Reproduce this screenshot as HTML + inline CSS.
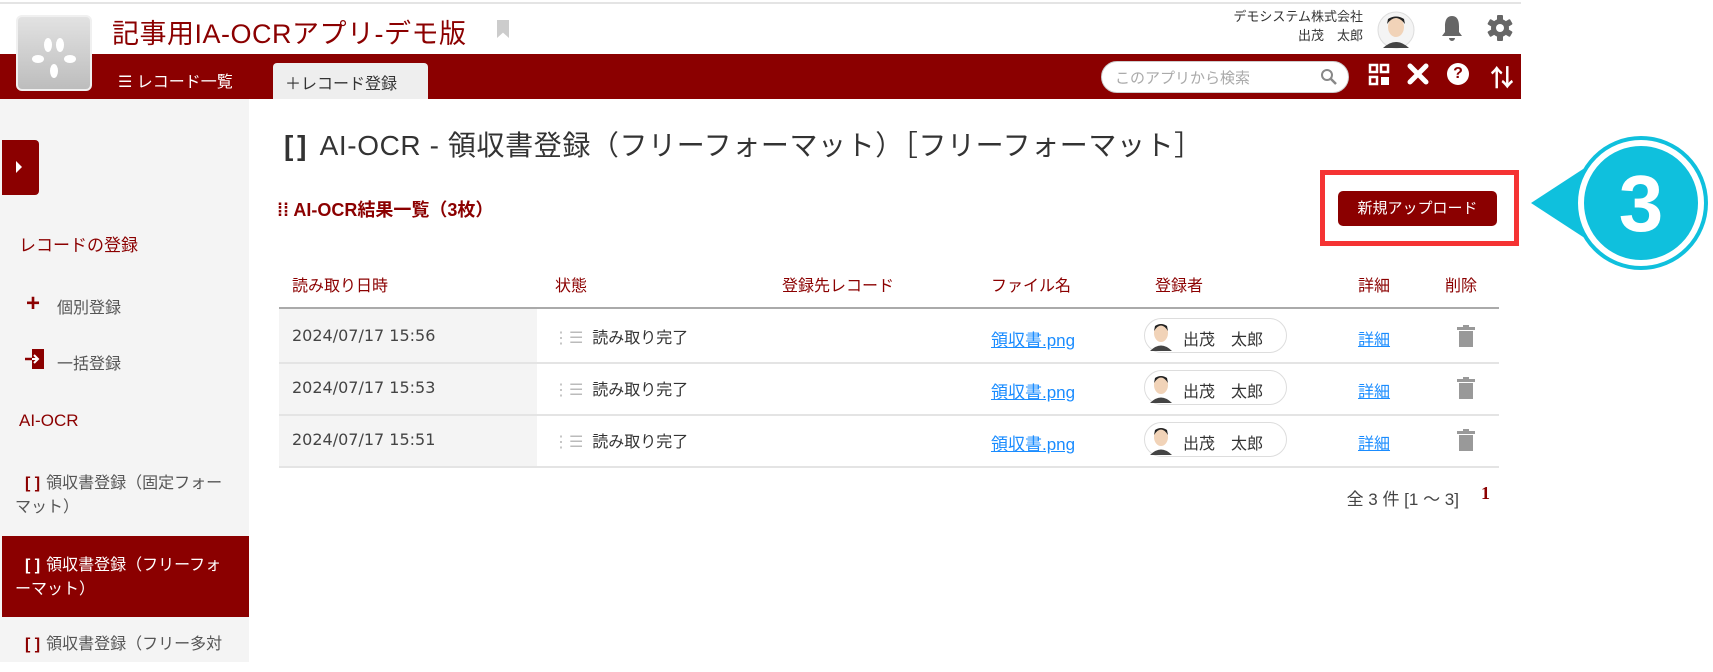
<!DOCTYPE html>
<html><head><meta charset="utf-8"><style>
*{margin:0;padding:0;box-sizing:border-box}
body{width:1713px;height:672px;overflow:hidden;background:#fff;font-family:"Liberation Sans","Noto Sans CJK JP",sans-serif;position:relative;color:#333}
.a{position:absolute;white-space:nowrap}
.red{color:#8b0000}
</style></head><body>
<div class="a" style="left:0;top:2px;width:1521px;height:2px;background:#e4e4e4"></div>
<div class="a" style="left:0;top:54px;width:1521px;height:45px;background:#8b0000"></div>
<div class="a" style="left:16px;top:15px;width:76px;height:76px;border-radius:6px;background:linear-gradient(#e2e2e2,#bdbdbd);border:2px solid #f0f0f0">
<svg width="72" height="72" viewBox="0 0 72 72"><g fill="#fff"><ellipse cx="30" cy="28" rx="4" ry="7"/><ellipse cx="42" cy="28" rx="4" ry="7"/><ellipse cx="20" cy="42" rx="6" ry="4"/><ellipse cx="52" cy="42" rx="6" ry="4"/><ellipse cx="36" cy="54" rx="4" ry="7"/></g></svg></div>
<div class="a red" style="left:112px;top:12px;font-size:27px;letter-spacing:0.5px">記事用IA-OCRアプリ-デモ版</div>
<div class="a" style="left:497px;top:20px;width:12px;height:18px;background:#ccc;clip-path:polygon(0 0,100% 0,100% 100%,50% 70%,0 100%)"></div>
<div class="a" style="left:118px;top:68px;font-size:16px;color:#fff">☰ レコード一覧</div>
<div class="a" style="left:273px;top:63px;width:155px;height:36px;background:#eeeeee;border-radius:4px 4px 0 0"></div>
<div class="a" style="left:285px;top:70px;font-size:16px;color:#333">＋レコード登録</div>
<div class="a" style="left:1205px;top:7px;width:158px;text-align:right;font-size:13px;color:#333;line-height:19px">デモシステム株式会社<br>出茂　太郎</div>
<svg class="a" style="left:1377px;top:10px" width="38" height="40" viewBox="0 0 38 40"><circle cx="19" cy="20" r="18" fill="#f4f4f4" stroke="#ddd"/><ellipse cx="19" cy="17" rx="8" ry="10" fill="#f1d3b8"/><path d="M10 14 Q19 2 28 14 L27 9 Q19 4 11 9Z" fill="#222"/><path d="M6 38 Q19 26 32 38Z" fill="#444"/></svg>
<svg class="a" style="left:1440px;top:14px" width="24" height="28" viewBox="0 0 24 28"><path d="M12 2 C6 2 5 8 5 12 L5 18 L2 22 L22 22 L19 18 L19 12 C19 8 18 2 12 2Z M9 24 a3 3 0 0 0 6 0Z" fill="#666"/></svg>
<svg class="a" style="left:1486px;top:14px" width="28" height="28" viewBox="0 0 28 28"><g fill="#666"><circle cx="14" cy="14" r="9"/><rect x="11" y="1" width="6" height="26" rx="1"/><rect x="11" y="1" width="6" height="26" rx="1" transform="rotate(60 14 14)"/><rect x="11" y="1" width="6" height="26" rx="1" transform="rotate(120 14 14)"/></g><circle cx="14" cy="14" r="4" fill="#fff"/></svg>
<div class="a" style="left:1101px;top:61px;width:248px;height:32px;background:#fff;border-radius:16px;border:1px solid #ccc"></div>
<div class="a" style="left:1115px;top:67px;font-size:15px;color:#aaa">このアプリから検索</div>
<svg class="a" style="left:1320px;top:68px" width="18" height="18" viewBox="0 0 18 18"><circle cx="7" cy="7" r="5" fill="none" stroke="#888" stroke-width="2"/><path d="M11 11 L16 16" stroke="#888" stroke-width="2.5"/></svg>
<svg class="a" style="left:1368px;top:63px" width="22" height="24" viewBox="0 0 22 24"><g fill="none" stroke="#fff" stroke-width="2.5"><rect x="2" y="2" width="7" height="7"/><rect x="13" y="2" width="7" height="7"/><rect x="2" y="14" width="7" height="7"/></g><rect x="13" y="14" width="8" height="8" fill="#fff"/></svg>
<svg class="a" style="left:1405px;top:61px" width="26" height="26" viewBox="0 0 26 26"><g stroke="#fff" stroke-width="5" stroke-linecap="round"><path d="M5 5 L21 21"/><path d="M21 5 L5 21"/></g></svg>
<div class="a" style="left:1447px;top:63px;width:22px;height:22px;border-radius:50%;background:#fff;color:#8b0000;font-weight:bold;font-size:16px;text-align:center;line-height:22px">?</div>
<div class="a" style="left:1490px;top:58px;font-size:24px;color:#fff;font-weight:bold">⇅</div>
<div class="a" style="left:0;top:99px;width:249px;height:563px;background:#f4f4f4"></div>
<div class="a" style="left:2px;top:140px;width:37px;height:55px;background:#8b0000;border-radius:0 4px 4px 0"></div>
<div class="a" style="left:16px;top:161px;width:0;height:0;border-left:6px solid #fff;border-top:6px solid transparent;border-bottom:6px solid transparent"></div>
<div class="a red" style="left:19px;top:231px;font-size:17px">レコードの登録</div>
<div class="a red" style="left:26px;top:290px;font-size:24px;font-weight:bold">+</div>
<div class="a" style="left:57px;top:294px;font-size:16px;color:#555">個別登録</div>
<svg class="a" style="left:24px;top:348px" width="24" height="22"><path d="M8 1 L20 1 L20 21 L8 21Z" fill="#8b0000"/><path d="M1 11 L14 11 M10 7 L14 11 L10 15" stroke="#8b0000" stroke-width="2.5" fill="none"/><path d="M8 11 L14 11 M10 7 L14 11 L10 15" stroke="#fff" stroke-width="2" fill="none"/></svg>
<div class="a" style="left:57px;top:350px;font-size:16px;color:#555">一括登録</div>
<div class="a red" style="left:19px;top:411px;font-size:17px">AI-OCR</div>
<div class="a" style="left:15px;top:472px;width:214px;font-size:16px;color:#555;line-height:24px;white-space:normal"><span class="red" style="font-weight:bold;margin:0 6px 0 10px">[ ]</span>領収書登録（固定フォーマット）</div>
<div class="a" style="left:2px;top:536px;width:247px;height:81px;background:#8b0000"></div>
<div class="a" style="left:15px;top:554px;width:214px;font-size:16px;color:#fff;line-height:24px;white-space:normal"><span style="font-weight:bold;margin:0 6px 0 10px">[ ]</span>領収書登録（フリーフォーマット）</div>
<div class="a" style="left:15px;top:630px;font-size:16px;color:#555"><span class="red" style="font-weight:bold;margin:0 6px 0 10px">[ ]</span>領収書登録（フリー多対</div>
<div class="a" style="left:284px;top:124px;font-size:28px;color:#333;letter-spacing:0.6px"><span style="font-weight:bold;letter-spacing:-2px">[ ]</span>&nbsp; AI-OCR - 領収書登録（フリーフォーマット）［フリーフォーマット］</div>
<div class="a red" style="left:277px;top:196px;font-size:18px;font-weight:bold">⁞⁞ AI-OCR結果一覧（3枚）</div>
<div class="a" style="left:1320px;top:170px;width:199px;height:76px;border:5px solid #f53333"></div>
<div class="a" style="left:1338px;top:191px;width:159px;height:35px;background:#8b0000;border-radius:5px;color:#fff;font-size:15px;text-align:center;line-height:35px">新規アップロード</div>
<svg class="a" style="left:1525px;top:130px" width="188" height="146" viewBox="1525 130 188 146"><path d="M1531 203 L1600 158 L1600 248Z" fill="#0fc0dd"/><circle cx="1641" cy="203" r="67" fill="#0fc0dd"/><circle cx="1641" cy="203" r="60" fill="none" stroke="#fff" stroke-width="6"/><text x="1641" y="231" font-family="Liberation Sans" font-size="80" font-weight="bold" fill="#fff" text-anchor="middle">3</text></svg>
<div class="a red" style="left:292px;top:272px;font-size:16px">読み取り日時</div>
<div class="a red" style="left:555px;top:272px;font-size:16px">状態</div>
<div class="a red" style="left:782px;top:272px;font-size:16px">登録先レコード</div>
<div class="a red" style="left:991px;top:272px;font-size:16px">ファイル名</div>
<div class="a red" style="left:1155px;top:272px;font-size:16px">登録者</div>
<div class="a red" style="left:1358px;top:272px;font-size:16px">詳細</div>
<div class="a red" style="left:1445px;top:272px;font-size:16px">削除</div>
<div class="a" style="left:279px;top:307px;width:1220px;height:2px;background:#aaa"></div>
<div class="a" style="left:279px;top:309px;width:258px;height:157px;background:#f4f4f4"></div>
<div class="a" style="left:279px;top:362px;width:1220px;height:2px;background:#e4e4e4"></div>
<div class="a" style="left:279px;top:414px;width:1220px;height:2px;background:#e4e4e4"></div>
<div class="a" style="left:279px;top:466px;width:1220px;height:2px;background:#e4e4e4"></div>
<div class="a" style="left:292px;top:326px;font-size:16px;font-family:'DejaVu Sans',sans-serif;color:#444">2024/07/17 15:56</div>
<div class="a" style="left:292px;top:378px;font-size:16px;font-family:'DejaVu Sans',sans-serif;color:#444">2024/07/17 15:53</div>
<div class="a" style="left:292px;top:430px;font-size:16px;font-family:'DejaVu Sans',sans-serif;color:#444">2024/07/17 15:51</div>
<div class="a" style="left:553px;top:324px;font-size:16px"><span style="color:#bbb">⋮☰</span>&nbsp; 読み取り完了</div>
<div class="a" style="left:553px;top:376px;font-size:16px"><span style="color:#bbb">⋮☰</span>&nbsp; 読み取り完了</div>
<div class="a" style="left:553px;top:428px;font-size:16px"><span style="color:#bbb">⋮☰</span>&nbsp; 読み取り完了</div>
<div class="a" style="left:991px;top:326px;font-size:17px;color:#1a8cff;text-decoration:underline">領収書.png</div>
<div class="a" style="left:991px;top:378px;font-size:17px;color:#1a8cff;text-decoration:underline">領収書.png</div>
<div class="a" style="left:991px;top:430px;font-size:17px;color:#1a8cff;text-decoration:underline">領収書.png</div>
<div class="a" style="left:1144px;top:318px;width:143px;height:35px;border:1px solid #ddd;border-radius:18px"></div>
<div class="a" style="left:1144px;top:370px;width:143px;height:35px;border:1px solid #ddd;border-radius:18px"></div>
<div class="a" style="left:1144px;top:422px;width:143px;height:35px;border:1px solid #ddd;border-radius:18px"></div>
<svg class="a" style="left:1146px;top:320px" width="30" height="31"><ellipse cx="15" cy="13" rx="7" ry="9" fill="#f1d3b8"/><path d="M8 11 Q15 0 22 11 L21 6 Q15 2 9 6Z" fill="#222"/><path d="M4 31 Q15 20 26 31Z" fill="#444"/></svg>
<svg class="a" style="left:1146px;top:372px" width="30" height="31"><ellipse cx="15" cy="13" rx="7" ry="9" fill="#f1d3b8"/><path d="M8 11 Q15 0 22 11 L21 6 Q15 2 9 6Z" fill="#222"/><path d="M4 31 Q15 20 26 31Z" fill="#444"/></svg>
<svg class="a" style="left:1146px;top:424px" width="30" height="31"><ellipse cx="15" cy="13" rx="7" ry="9" fill="#f1d3b8"/><path d="M8 11 Q15 0 22 11 L21 6 Q15 2 9 6Z" fill="#222"/><path d="M4 31 Q15 20 26 31Z" fill="#444"/></svg>
<div class="a" style="left:1183px;top:326px;font-size:16px">出茂　太郎</div>
<div class="a" style="left:1183px;top:378px;font-size:16px">出茂　太郎</div>
<div class="a" style="left:1183px;top:430px;font-size:16px">出茂　太郎</div>
<div class="a" style="left:1358px;top:326px;font-size:16px;color:#1a8cff;text-decoration:underline">詳細</div>
<div class="a" style="left:1358px;top:378px;font-size:16px;color:#1a8cff;text-decoration:underline">詳細</div>
<div class="a" style="left:1358px;top:430px;font-size:16px;color:#1a8cff;text-decoration:underline">詳細</div>
<svg class="a" style="left:1456px;top:325px" width="20" height="22"><rect x="1" y="2" width="18" height="3" fill="#999"/><rect x="7" y="0" width="6" height="3" fill="#999"/><rect x="3" y="6" width="14" height="16" fill="#999"/></svg>
<svg class="a" style="left:1456px;top:377px" width="20" height="22"><rect x="1" y="2" width="18" height="3" fill="#999"/><rect x="7" y="0" width="6" height="3" fill="#999"/><rect x="3" y="6" width="14" height="16" fill="#999"/></svg>
<svg class="a" style="left:1456px;top:429px" width="20" height="22"><rect x="1" y="2" width="18" height="3" fill="#999"/><rect x="7" y="0" width="6" height="3" fill="#999"/><rect x="3" y="6" width="14" height="16" fill="#999"/></svg>
<div class="a" style="left:1326px;top:485px;font-size:17px;color:#444;width:133px;text-align:right">全 3 件 [1 ～ 3]</div>
<div class="a red" style="left:1481px;top:483px;font-size:18px;font-weight:bold;font-family:'Liberation Serif',serif">1</div>
</body></html>
